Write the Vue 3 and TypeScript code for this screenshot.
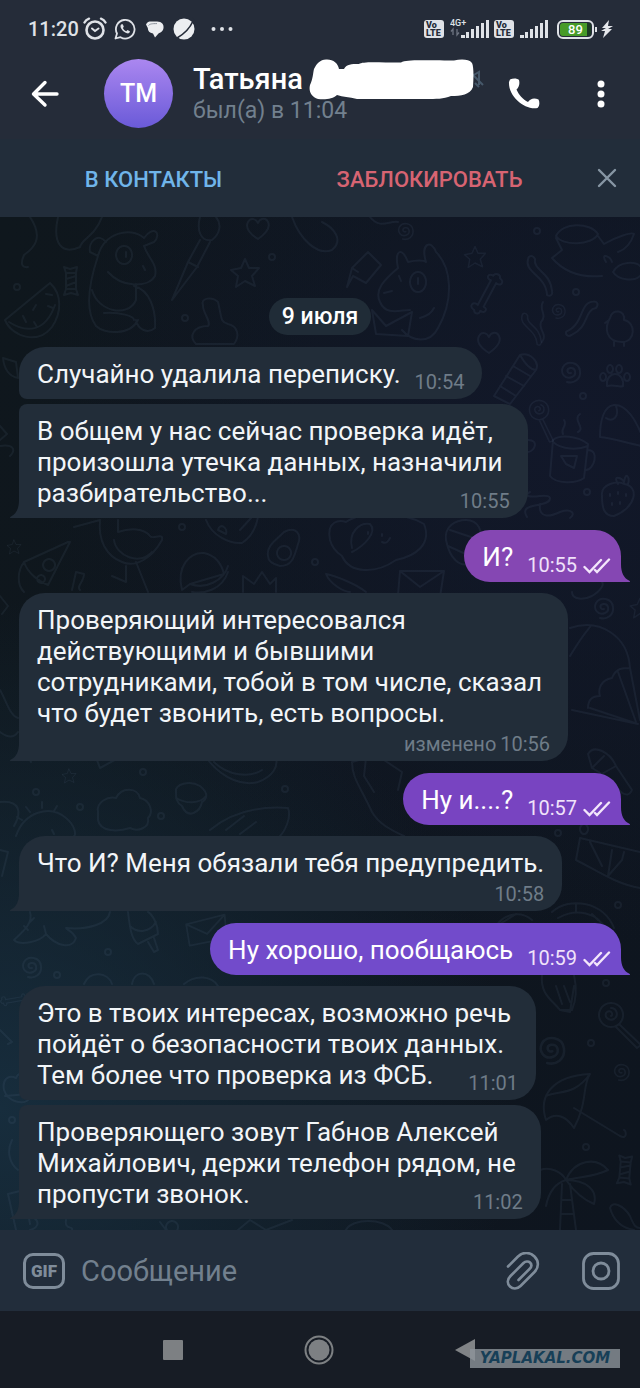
<script setup lang="ts">
import { ref } from 'vue'

type MetaMode = 'inline' | 'overlap' | 'below'

interface Message {
  id: number
  lines: string[]
  time: string
  out?: boolean
  edited?: boolean
  mode: MetaMode
  tail: boolean
  joinTop?: boolean
  joinBottom?: boolean
  tint?: string
}

interface Doodle {
  shape: string
  x: number
  y: number
  scale?: number
  turn?: number
}

const draft = ref('')

const messages: Message[] = [
  { id: 1, lines: ['Случайно удалила переписку.'], time: '10:54', mode: 'inline', tail: false, joinBottom: true },
  {
    id: 2,
    lines: ['В общем у нас сейчас проверка идёт,', 'произошла утечка данных, назначили', 'разбирательство...'],
    time: '10:55', mode: 'overlap', tail: true, joinTop: true,
  },
  { id: 3, lines: ['И?'], time: '10:55', out: true, mode: 'inline', tail: true, tint: 'pink' },
  {
    id: 4,
    lines: ['Проверяющий интересовался', 'действующими и бывшими', 'сотрудниками, тобой в том числе, сказал', 'что будет звонить, есть вопросы.'],
    time: '10:56', edited: true, mode: 'below', tail: true,
  },
  { id: 5, lines: ['Ну и....?'], time: '10:57', out: true, mode: 'inline', tail: true, tint: 'violet' },
  { id: 6, lines: ['Что И? Меня обязали тебя предупредить.'], time: '10:58', mode: 'below', tail: true },
  { id: 7, lines: ['Ну хорошо, пообщаюсь'], time: '10:59', out: true, mode: 'inline', tail: true, tint: 'indigo' },
  {
    id: 8,
    lines: ['Это в твоих интересах, возможно речь', 'пойдёт о безопасности твоих данных.', 'Тем более что проверка из ФСБ.'],
    time: '11:01', mode: 'overlap', tail: false, joinBottom: true,
  },
  {
    id: 9,
    lines: ['Проверяющего зовут Габнов Алексей', 'Михайлович, держи телефон рядом, не', 'пропусти звонок.'],
    time: '11:02', mode: 'overlap', tail: true, joinTop: true,
  },
]

const shapes: Record<string, string> = {
  star: 'M0 -14L4 -5L14 -5L7 3L10 13L0 8L-9 14L-7 3L-14 -3L-4 -5Z',
  heart: 'M0 11C-8 6 -13 0 -10 -6C-7 -11 -2 -9 0 -5C2 -10 8 -11 10 -6C13 0 7 6 0 11Z',
  spiral: 'M1 1C-3 2 -4 -3 0 -4C6 -5 7 3 2 5C-5 8 -10 1 -7 -5C-3 -12 9 -10 10 -1C11 7 4 12 -3 10',
  dot: 'M-3 0A3 3 0 1 0 3 0A3 3 0 1 0 -3 0',
  candy: 'M-5 -8H5V8H-5ZM-5 -8L-7 -14L-1 -12L6 -14L5 -8M-5 8L-7 14L0 12L7 14L5 8M-5 -2L5 -5M-5 5L5 1',
  bone: 'M-3 -14V14C-9 12 -11 20 -4 20C-2 24 3 22 2 18C8 19 8 12 3 13V-14C8 -12 11 -19 4 -20C3 -24 -3 -23 -3 -19C-9 -20 -9 -13 -3 -14Z',
  paw: 'M-8 10C-9 2 -4 -2 0 -2C5 -2 9 3 8 10C4 12 0 8 -8 10ZM-12 -3a3 4 0 1 0 .1 0M-5 -11a3 4 0 1 0 .1 0M4 -11a3 4 0 1 0 .1 0M12 -3a3 4 0 1 0 .1 0',
  lolly: 'M0 -12A12 12 0 1 0 .1 -12M0 -7C6 -7 8 1 3 4C-3 7 -8 0 -4 -3C0 -6 3 0 0 1M8 9L30 30L26 33L5 12',
  letter: 'M-22 -12L22 -12L18 14L-24 12ZM-22 -12L-2 4L22 -12',
  ribbon: 'M-10 -18C-14 -4 8 -2 9 18C12 20 15 18 14 14C12 -6 -5 -6 -3 -18C-5 -22 -9 -22 -10 -18Z',
}

const doodles: Doodle[] = [
  { shape: 'heart', x: 258, y: 228 }, { shape: 'star', x: 245, y: 273 }, { shape: 'dot', x: 272, y: 257 },
  { shape: 'dot', x: 185, y: 318 }, { shape: 'candy', x: 71, y: 281 }, { shape: 'dot', x: 17, y: 287 },
  { shape: 'spiral', x: 405, y: 231, scale: 0.8 }, { shape: 'star', x: 475, y: 257, scale: 0.75 },
  { shape: 'bone', x: 487, y: 294, turn: 28 }, { shape: 'heart', x: 489, y: 342 },
  { shape: 'ribbon', x: 538, y: 277 }, { shape: 'dot', x: 537, y: 231 }, { shape: 'dot', x: 576, y: 292 },
  { shape: 'spiral', x: 558, y: 311, scale: 0.7 }, { shape: 'ribbon', x: 530, y: 330, scale: 0.8 },
  { shape: 'ribbon', x: 580, y: 317, turn: 70 }, { shape: 'spiral', x: 570, y: 372 },
  { shape: 'paw', x: 615, y: 376 }, { shape: 'dot', x: 583, y: 396 }, { shape: 'lolly', x: 539, y: 410, scale: 0.8, turn: 20 },
  { shape: 'dot', x: 587, y: 492 }, { shape: 'star', x: 14, y: 547, scale: 0.5 }, { shape: 'letter', x: 422, y: 583 },
  { shape: 'spiral', x: 603, y: 608 }, { shape: 'star', x: 640, y: 608, scale: 0.7 },
  { shape: 'star', x: 69, y: 776, scale: 0.5 }, { shape: 'dot', x: 36, y: 792 }, { shape: 'dot', x: 80, y: 807 },
  { shape: 'dot', x: 161, y: 816 }, { shape: 'dot', x: 285, y: 789 }, { shape: 'dot', x: 143, y: 772 },
  { shape: 'letter', x: 208, y: 930, scale: 0.9, turn: -14 }, { shape: 'dot', x: 108, y: 952 },
  { shape: 'spiral', x: 31, y: 967 }, { shape: 'dot', x: 57, y: 975 }, { shape: 'dot', x: 618, y: 905 },
  { shape: 'dot', x: 606, y: 983 }, { shape: 'lolly', x: 611, y: 1015 }, { shape: 'spiral', x: 551, y: 1050, scale: 1.3 },
  { shape: 'dot', x: 591, y: 1043 }, { shape: 'spiral', x: 621, y: 1072, scale: 0.8 }, { shape: 'dot', x: 586, y: 1147 },
  { shape: 'candy', x: 625, y: 1170, turn: 5 }, { shape: 'dot', x: 12, y: 1120 }, { shape: 'bone', x: 14, y: 1000, scale: 0.6, turn: 80 },
  { shape: 'dot', x: 315, y: 562 }, { shape: 'dot', x: 182, y: 527 }, { shape: 'dot', x: 558, y: 833 },
]

const sketches: string[] = [
  // squiggle, melon and dog
  'M30 217C44 238 34 248 24 255C20 264 22 268 28 267M58 217C52 244 62 255 80 247C82 238 94 238 102 217',
  'M50 283L5 320C12 337 38 345 52 327C62 312 62 294 50 283ZM9 322C26 333 45 333 55 305M23 316l3 6M36 305l-3 5M48 306l5 2M34 322l3 5M46 294l6 1',
  'M106 242C98 232 88 242 90 252L98 256C104 233 130 226 144 238C154 224 162 234 154 242L144 246C148 258 158 264 155 276C148 288 122 288 108 272M98 256C90 280 84 310 96 326C104 334 130 336 138 320M124 246a8 9 0 1 0 .1 0M126 252v5M143 266l2 4M134 286C150 290 156 310 155 328C148 334 138 330 136 320M92 290C98 312 128 318 136 300V284M104 313C120 312 134 316 134 320',
  // brush and bunny
  'M200 217C196 232 202 242 212 240C220 234 222 224 216 217M200 240L188 262L172 300L197 267L210 242M188 262L198 267',
  'M203 305C200 298 212 296 218 302C222 318 220 322 228 324C238 326 240 336 234 344H196C188 336 194 326 208 326C212 322 202 312 203 305Z',
  // shell, pencil, puppy
  'M292 217C300 240 318 256 332 250C344 240 334 228 322 222M370 217C380 230 390 220 398 222',
  'M347 287L352 268L368 252L381 265L366 283L353 276ZM352 268L358 272',
  'M398 268C394 250 402 246 408 262C416 260 424 260 426 262C420 242 432 240 436 252C452 268 454 300 438 328C430 344 412 342 402 330M398 268C384 280 374 290 380 302C386 316 400 310 410 310M418 272a8 10 0 1 0 .1 0M418 278v6M399 276l2 5M384 293l8 -2M372 310L376 334L408 336L412 312L386 326L372 310M420 318C428 316 432 312 434 308',
  // jar and crab
  'M556 236C562 222 590 222 598 234C592 246 562 246 556 236ZM556 238L562 250L552 258C564 272 580 278 602 276M598 236L604 244C618 236 632 232 634 234C630 246 624 250 618 252M606 262C600 252 610 256 612 262M613 272C620 260 636 262 640 266M613 272C618 280 634 282 640 276',
  'M543 302C538 310 548 314 541 322C538 330 548 334 542 342',
  // firework tube, duck
  'M494 396L520 355C530 352 540 362 536 370L510 404ZM500 386L516 396M506 376L524 386M513 366L530 376M520 355C524 362 530 370 536 370',
  'M610 318C612 308 626 310 624 320C636 322 636 342 622 342C606 342 604 328 610 318ZM614 342v4M624 342v4M609 320l-4 3',
  // cake slice, mug, strawberry
  'M600 437C600 420 604 406 614 405C626 404 636 420 642 436M600 437C612 438 630 444 642 446M606 418C612 422 620 418 616 406',
  'M553 440L550 476C556 484 576 484 584 478L588 444C578 436 560 434 553 440ZM553 442C562 450 578 450 588 446M588 450C600 450 594 470 586 470M561 456L577 456L574 468L566 464ZM563 434C560 428 568 426 564 420M578 432C586 428 572 420 580 414',
  'M602 496C600 484 618 480 624 484C640 486 636 508 614 516C604 516 602 508 602 496ZM618 484C612 474 622 478 624 482C626 470 630 478 628 484M610 494v2M618 492v2M626 494v2M612 503v2M620 502v2',
  'M527 517C520 506 534 506 542 504C552 502 554 494 540 496C524 498 526 494 530 492M540 504C538 520 552 516 560 512C572 508 576 514 570 518M528 440C540 440 534 452 528 452',
  // pizza, stork, burger
  'M68 542L24 562C28 574 40 582 48 585L70 542ZM49 559a6 6 0 1 0 .1 0M41 575a4 4 0 1 0 .1 0M24 562C18 570 16 584 24 592',
  'M74 527L100 520C98 540 106 556 122 562C136 568 152 558 162 540C164 532 152 540 150 536C144 528 130 528 118 532M118 520V532M126 566L126 582L112 576M136 562L148 592M114 540C116 556 140 566 152 552',
  'M182 590C176 566 190 552 204 553C218 556 222 566 224 574L190 584ZM190 584C206 590 224 580 228 566M192 592C204 594 222 590 228 572',
  'M206 520C212 536 230 544 242 543C250 538 256 528 258 517M218 530C220 522 228 528 226 534ZM240 530L252 517',
  'M268 556C266 546 276 540 284 532C296 526 302 534 298 544C294 558 292 566 280 566C272 564 268 560 268 556ZM284 546a7 7 0 1 0 .1 0M243 592V576L254 584L262 572L270 584L276 578V592M72 590L76 572L84 574C84 582 76 586 80 590',
  // bear
  'M330 540C326 520 340 520 346 522C360 512 400 510 424 524C432 544 416 556 396 560C376 574 350 574 342 556C336 552 332 548 330 540ZM352 548C348 532 360 522 370 524C378 532 364 546 352 552M368 532v2M382 534v2M382 542C386 544 388 542 390 538',
  'M446 540C444 526 456 520 466 520C478 520 484 530 480 548M446 540C450 560 460 566 468 564M450 530L480 540M448 546L470 556M326 574C336 576 356 584 366 592M326 574C330 584 344 592 350 592',
  // parachute
  'M570 628C600 618 628 636 630 668C622 668 616 668 612 678C600 680 598 690 600 696C592 696 588 700 588 708M570 656C582 636 586 632 590 627M630 668L640 720M618 672L636 722M572 710L638 724M590 708L638 724M572 592C572 600 584 600 592 596C602 590 604 584 602 582',
  // cactus, bowl, cloud and shuttle
  'M31 762C24 750 26 742 36 742H90L100 768L122 756M352 762C352 778 360 786 372 812C380 826 396 832 404 836M352 762L366 758L364 776L374 792M384 760L402 772L398 790',
  'M208 760C224 780 244 786 258 782C274 776 278 766 276 758M214 762C228 776 250 778 262 770',
  'M98 812C96 802 108 796 116 798C122 786 138 788 140 798C150 800 154 812 148 818C150 828 138 832 130 828C118 832 100 832 98 820ZM176 792C174 784 190 780 200 786C210 794 206 800 202 802C200 812 188 820 182 806C176 802 176 798 176 792ZM176 798C186 804 200 804 206 796',
  'M210 830C232 812 260 806 288 808C292 818 284 832 280 836M226 830L244 816M240 834L256 822',
  'M16 836C24 812 50 804 66 818C76 826 76 836 74 836M22 820l-5 -3M30 812l-4 -5M42 808l0 -6M54 811l3 -5M52 830l2 4M0 802C20 800 22 812 14 826',
  'M588 754C594 744 610 752 616 766L632 790C628 800 618 792 612 780L592 768ZM592 768L604 756M598 776L616 766',
  // picture frame and fruit arc
  'M580 838L640 852M580 838L576 860C596 870 616 884 640 888M612 850L608 876L622 860L624 852M590 842L602 866M584 834a4 5 0 1 1 .1 0',
  'M552 912C570 896 604 902 614 928M558 918C576 908 598 912 606 930M576 904L576 912M592 914l6 6',
  // dinosaur and ice cream
  'M30 912C34 924 20 934 14 940C20 946 40 942 46 934C56 946 72 950 76 938C72 930 66 930 66 928C88 930 108 924 110 912M30 922l4 -4M28 930l-4 -4M46 934L44 926',
  'M128 912C130 930 132 940 138 944L158 934C158 924 152 914 148 912M130 926C138 934 150 932 156 922M148 942L154 952L158 950L154 938',
  'M84 984C90 970 108 972 112 984M132 984C134 970 150 970 154 984M184 984C196 974 212 976 218 986M496 926C504 914 520 910 532 920M500 924l16 -10',
  // light bulb, umbrella
  'M542 975C540 994 552 1000 560 1010L572 1010C578 996 576 984 574 975M560 1010L570 1012L574 986M556 986L562 1004M564 986L570 1002',
  'M546 1120C538 1096 552 1076 590 1074C582 1086 588 1102 574 1128C566 1116 556 1112 546 1120ZM546 1096C560 1090 574 1096 590 1074M574 1108L620 1136C628 1140 626 1130 624 1130',
  // palm
  'M540 1170C550 1166 562 1172 566 1180C574 1160 596 1156 608 1170C592 1178 580 1176 566 1180C586 1180 598 1190 594 1204C584 1200 576 1194 566 1180C552 1184 548 1196 546 1206M560 1230L562 1184M576 1230L570 1184M562 1200h10M561 1214h13',
  'M610 1208C612 1200 624 1206 630 1216C634 1226 636 1228 640 1228M610 1208C614 1222 622 1228 634 1230M8 1194L24 1190L30 1224M8 1194L16 1230M34 1218C40 1222 38 1228 30 1230M66 1220C64 1230 74 1226 72 1230M160 1222L166 1230M172 1221a6 6 0 1 0 .1 0M238 1230L250 1220L266 1230L292 1220M346 1230C352 1218 384 1218 392 1230M12 1140C6 1152 10 1164 18 1170',
  'M4 1090C2 1080 8 1074 16 1078C20 1068 30 1078 24 1084M4 1090C8 1102 24 1106 30 1098M5 1096L28 1094M0 1030L12 1042L8 1044M0 850L8 852L2 876M0 426L7 434L0 440M3 358L16 362L18 378C8 376 4 368 3 358Z',
  'M0 690C6 700 10 716 18 718M0 732C8 738 14 738 18 732M0 596L8 606L2 614M0 446C14 444 16 450 10 456',
]

function place(d: Doodle): string {
  return `translate(${d.x} ${d.y}) rotate(${d.turn ?? 0}) scale(${d.scale ?? 1})`
}
</script>

<template>
  <div class="screen">
    <header class="top">
      <div class="status">
        <span class="clock">11:20</span>
        <svg class="s-alarm" width="24" height="24" viewBox="0 0 24 24" fill="none" stroke="#dfe2e7" stroke-linecap="round">
          <circle cx="12" cy="13" r="8.5" stroke-width="2.6" />
          <path d="M1.5 5.5C2.5 3.5 4 2.3 6 1.7M22.5 5.5C21.5 3.5 20 2.3 18 1.7" stroke-width="2.4" />
          <path d="M9 11.5L12 14L15.5 11.5" stroke-width="2" />
        </svg>
        <svg class="s-wa" width="22" height="22" viewBox="0 0 22 22">
          <path d="M1.5 20.5L3 15.500A9.300 9.300 0 1 1 6.500 19.200Z" fill="none" stroke="#dfe2e7" stroke-width="1.8" stroke-linejoin="round" />
          <path d="M7.500 6.200C6.200 7 6.200 8.800 7.200 10.500C8.600 13 10.500 14.600 13 15.300C14.800 15.700 16 14.500 15.900 13.200L13.500 12L12.300 13.200C10.800 12.600 9.500 11.400 8.900 9.900L9.800 8.800L8.800 6.300Z" fill="#dfe2e7" />
        </svg>
        <svg class="s-msg" width="20" height="20" viewBox="0 0 20 20">
          <path d="M1 5.500C2 3 4 2.500 6 2.500H12C17 2.500 19 5.500 18.500 9C18 12.500 15.500 13.500 13.500 14.500L10 18.500L8 14.500C4.500 14 2.800 12 2.800 9Z" fill="#eceef1" />
          <path d="M3.500 6.500C5 4.800 7 4.600 12 4.600" fill="none" stroke="#8b919b" stroke-width="1" />
        </svg>
        <svg class="s-globe" width="24" height="24" viewBox="0 0 24 24">
          <circle cx="12" cy="12" r="10.500" fill="#eceef1" />
          <path d="M5 21C12 17 18 11 21 4" fill="none" stroke="#252c39" stroke-width="1.600" />
          <path d="M0 18L5 24H0ZM20 0L24 5V0Z" fill="#252c39" />
        </svg>
        <svg class="s-dots" width="22" height="6" viewBox="0 0 22 6" fill="#dfe2e7">
          <circle cx="2.500" cy="3" r="2" /><circle cx="11" cy="3" r="2" /><circle cx="19.500" cy="3" r="2" />
        </svg>
        <span class="spacer"></span>
        <span class="volte">Vo<br>LTE</span>
        <svg class="s-sig4" width="40" height="22" viewBox="0 0 40 22" fill="#dfe2e7">
          <text x="0" y="8" class="tiny">4G+</text>
          <path d="M3 11V17M1 13.500L3 11L3 17M7 11V17L9 14.500" fill="none" stroke="#6d7481" stroke-width="1.300" />
          <path d="M11 17h4v3h-4zM16 14h3v6h-3zM21 11h3v9h-3zM26 8h3v12h-3zM31 5h3v15h-3zM36 2h3v18h-3z" />
        </svg>
        <span class="volte">Vo<br>LTE</span>
        <svg class="s-sig" width="29" height="22" viewBox="11 0 29 22" fill="#dfe2e7">
          <path d="M11 17h4v3h-4zM16 14h3v6h-3zM21 11h3v9h-3zM26 8h3v12h-3zM31 5h3v15h-3zM36 2h3v18h-3z" />
        </svg>
        <span class="battery"><span class="charge">89</span></span>
        <svg class="s-bolt" width="12" height="18" viewBox="0 0 12 18">
          <path d="M8 0L1 8H5L0 11H4L2 18L11 9H7L12 6H7Z" fill="#e6e8ec" />
        </svg>
      </div>

      <div class="bar">
        <button class="icon-btn back" aria-label="Назад">
          <svg width="28" height="28" viewBox="0 0 28 28" fill="none" stroke="#fff" stroke-width="3.400" stroke-linecap="round" stroke-linejoin="round">
            <path d="M26 14H3M14 2.500L2.500 14L14 25" />
          </svg>
        </button>
        <div class="avatar">ТМ</div>
        <div class="who">
          <h1 class="name">Татьяна
            <svg class="scribble" width="176" height="42" viewBox="0 0 176 42">
              <path d="M163 17L170 13V26M166 24L170 28M162 14L174 26" stroke="#46586a" stroke-width="2" fill="none" />
              <path d="M17 0.500C24 0 29 4 30 10H35C38 5 42 5 50 5C54 2 70 3.500 92 3.500C98 0.500 110 1.500 145 1.500C152 0 160 0 163 4C165 8 164.500 20 164 28C161 36 152 37 142 37C134 40 128 40 116 40H48C40 38 34 38 28 36C24 40 16 41 9 40C2 38 -0.500 32 1 26C4 20 4 14 5 10C8 4 11 1 17 0.500Z" fill="#fff" />
            </svg>
          </h1>
          <p class="seen">был(а) в 11:04</p>
        </div>
        <button class="icon-btn call" aria-label="Позвонить">
          <svg width="32" height="32" viewBox="0 0 32 32">
            <path d="M2 1.500C5 0 9 0 11 2C12 6 11 9 8.500 11.500C10.500 16.500 15 21.500 20 24C22.500 20.500 26 19.500 30.500 21.500C32 24.500 31.500 28 29.500 30C17 32.500 0 18 1 4Z" fill="#fff" />
          </svg>
        </button>
        <button class="icon-btn more" aria-label="Ещё">
          <svg width="8" height="28" viewBox="0 0 8 28" fill="#fff">
            <circle cx="4" cy="4" r="3.500" /><circle cx="4" cy="14" r="3.500" /><circle cx="4" cy="24" r="3.500" />
          </svg>
        </button>
      </div>
    </header>

    <div class="actions">
      <button class="act add">В КОНТАКТЫ</button>
      <button class="act block">ЗАБЛОКИРОВАТЬ</button>
      <button class="icon-btn close" aria-label="Закрыть">
        <svg width="20" height="20" viewBox="0 0 20 20" stroke="#8796a4" stroke-width="2.400" stroke-linecap="round">
          <path d="M2 2L18 18M18 2L2 18" />
        </svg>
      </button>
    </div>

    <main class="chat">
      <svg class="wallpaper" viewBox="0 217 640 1013" preserveAspectRatio="xMidYMin slice" aria-hidden="true">
        <path v-for="(d, i) in sketches" :key="'s' + i" :d="d" />
        <path v-for="(d, i) in doodles" :key="'d' + i" :d="shapes[d.shape]" :transform="place(d)" />
      </svg>
      <div class="date">9 июля</div>
      <article
        v-for="m in messages"
        :key="m.id"
        class="bubble"
        :class="[m.mode, m.out ? 'out' : 'in', m.tint, { tailed: m.tail, edited: m.edited, 'join-top': m.joinTop, 'join-bottom': m.joinBottom }]"
      >
        <p class="text"><template v-for="(line, i) in m.lines" :key="i"><br v-if="i > 0">{{ line }}</template></p>
        <div class="meta">
          <span v-if="m.edited">изменено</span>
          <time>{{ m.time }}</time>
          <svg v-if="m.out" class="ticks" width="28" height="16" viewBox="0 0 28 16" fill="none" stroke="#f3e6fb" stroke-width="2.400" stroke-linecap="round">
            <path d="M1.500 9L6.500 14L18 2M12 12L14 14L26 1.500" />
          </svg>
        </div>
        <svg v-if="m.tail" class="tail" width="10" height="18" viewBox="0 0 10 18">
          <path d="M10 0V18H0.500C-0.500 18 0 17 1 16.500C6 14 9 9 9 0Z" />
        </svg>
      </article>
    </main>

    <form class="composer" @submit.prevent>
      <button type="button" class="gif" aria-label="GIF">GIF</button>
      <input v-model="draft" class="field" type="text" placeholder="Сообщение" aria-label="Сообщение">
      <button type="button" class="icon-btn clip" aria-label="Прикрепить">
        <svg width="34" height="38" viewBox="0 0 34 38" fill="none" stroke="#7f8c9a" stroke-width="2.600" stroke-linecap="round" stroke-linejoin="round">
          <path d="M2 14.500L12 4.500C17 -0.500 24 0 28.500 4.500C33 9 33 15.500 28.500 20L14.500 34C11 37.500 6.500 37 4 34.500C1 31.500 1 27.500 4.500 24L17.500 11C19.500 9 22.500 9 24 10.500C26 12.500 25.500 15 23.500 17L12.500 28" />
        </svg>
      </button>
      <button type="button" class="icon-btn cam" aria-label="Камера">
        <svg width="38" height="38" viewBox="0 0 38 38" fill="none" stroke="#7f8c9a" stroke-width="2.800">
          <rect x="1.500" y="1.500" width="35" height="35" rx="10" />
          <circle cx="19" cy="19" r="8" />
        </svg>
      </button>
    </form>

    <nav class="nav">
      <button class="icon-btn" aria-label="Недавние">
        <svg width="20" height="20" viewBox="0 0 20 20"><rect width="20" height="20" rx="1" fill="#7d8083" /></svg>
      </button>
      <button class="icon-btn" aria-label="Домой">
        <svg width="30" height="30" viewBox="0 0 30 30">
          <circle cx="15" cy="15" r="13.500" fill="none" stroke="#7d8083" stroke-width="2" />
          <circle cx="15" cy="15" r="10.500" fill="#7d8083" />
        </svg>
      </button>
      <button class="icon-btn" aria-label="Назад">
        <svg width="20" height="22" viewBox="0 0 20 22"><path d="M0 11L20 0V22Z" fill="#808386" /></svg>
      </button>
      <span class="mark">YAPLAKAL.COM</span>
    </nav>
  </div>
</template>

<style>
body {
  background: #171c25;
}
</style>

<style scoped>
.screen {
  display: flex;
  flex-direction: column;
  min-height: 100vh;
  font-family: Roboto, "Noto Sans", sans-serif;
  color: #f2f5f8;
}

.icon-btn {
  display: flex;
  padding: 0;
  border: 0;
  background: none;
}

.top {
  background: #252c39;
}

.status {
  display: flex;
  align-items: center;
  height: 58px;
  padding: 0 27px 0 28px;
}

.clock {
  font-size: 20px;
  font-weight: 500;
  color: #dfe2e7;
}

.s-alarm { margin-left: 4px; }
.s-wa { margin-left: 7px; }
.s-msg { margin-left: 9px; }
.s-globe { margin-left: 7px; }
.s-dots { margin-left: 15px; }
.s-sig4 { margin: 0 4px 0 6px; }
.s-sig { margin: 0 8px 0 6px; }
.s-bolt { margin-left: 7px; }

.spacer {
  flex: 1;
}

.tiny {
  font-size: 9px;
  font-weight: 500;
}

.volte {
  width: 20px;
  height: 18px;
  border-radius: 3px;
  background: #dfe2e7;
  color: #252c39;
  font-size: 9px;
  font-weight: 900;
  line-height: 8px;
  padding: 1px 2px;
  box-sizing: border-box;
}

.battery {
  position: relative;
  display: flex;
  width: 37px;
  height: 19px;
  box-sizing: border-box;
  padding: 1px;
  border: 2px solid #dfe2e7;
  border-radius: 6px;
}

.battery::after {
  content: "";
  position: absolute;
  right: -5px;
  top: 5px;
  width: 2px;
  height: 5px;
  background: #dfe2e7;
}

.charge {
  flex: 1;
  border-radius: 3px;
  background: linear-gradient(90deg, #479b28 88%, #1c3a24 88%);
  color: #fff;
  font-size: 13px;
  font-weight: 500;
  line-height: 13px;
  text-align: center;
}

.bar {
  display: flex;
  align-items: center;
  height: 71px;
  padding: 0 35px 10px 31px;
}

.avatar {
  display: flex;
  align-items: center;
  justify-content: center;
  width: 69px;
  height: 69px;
  margin: 0 20px 0 45px;
  border-radius: 50%;
  background: linear-gradient(#ab87f0, #6a5ad8);
  color: #fff;
  font-size: 25px;
  font-weight: 500;
}

.who {
  flex: 1;
  min-width: 0;
}

.name {
  position: relative;
  margin: 0;
  width: max-content;
  font-size: 29px;
  font-weight: 500;
  line-height: 34px;
  color: #fff;
}

.scribble {
  position: absolute;
  left: 100%;
  top: -3px;
  margin-left: 6px;
}

.seen {
  margin: 0;
  font-size: 23px;
  line-height: 30px;
  color: #72808e;
}

.more {
  margin-left: 57px;
}

.actions {
  display: flex;
  align-items: center;
  height: 78px;
  padding-right: 23px;
  background: #222d3a;
}

.act {
  padding: 3px 0 0;
  border: 0;
  background: none;
  font-family: inherit;
  font-size: 22px;
  font-weight: 500;
  line-height: 30px;
}

.add {
  flex: 307;
  color: #70b5ea;
}

.block {
  flex: 245;
  color: #d76472;
}

.close {
  margin-left: 45px;
}

.chat {
  position: relative;
  isolation: isolate;
  flex: 1;
  display: flex;
  flex-direction: column;
  align-items: flex-start;
  padding: 81px 19px 11px;
  overflow: hidden;
  background:
    radial-gradient(ellipse 85% 50% at 90% 22%, #12182a, transparent),
    radial-gradient(ellipse 80% 50% at 0% 88%, #172d3d, transparent),
    linear-gradient(100deg, #0f171d, #0e151f);
}

.wallpaper {
  position: absolute;
  inset: 0;
  z-index: -1;
  width: 100%;
  height: 100%;
  fill: none;
  stroke: rgba(140, 165, 205, 0.08);
  stroke-width: 2;
  stroke-linecap: round;
  stroke-linejoin: round;
}

.date {
  align-self: center;
  margin-bottom: 12px;
  padding: 0 13px;
  border-radius: 19px;
  background: #202c37;
  color: #fff;
  font-size: 23px;
  font-weight: 500;
  line-height: 37px;
}

.bubble {
  position: relative;
  display: flex;
  flex-direction: column;
  padding: 12px 18px 5px;
  border-radius: 26px;
  background: #222d39;
  margin-bottom: 12px;
  --tail: #222d39;
}

.bubble:last-child { margin-bottom: 0; }

.text {
  margin: 0 0 4px;
  font-size: 26px;
  line-height: 31px;
  white-space: nowrap;
}

.meta {
  display: flex;
  gap: 6px;
  align-self: flex-end;
  font-size: 20px;
  line-height: 23px;
  color: #6f7c88;
}

.inline {
  flex-direction: row;
  column-gap: 14px;
}

.overlap .text { padding-right: 7px; }
.overlap .meta { margin-top: -23px; }

.edited .text { padding-right: 8px; }
.edited .meta { gap: 4px; }

.join-bottom {
  margin-bottom: 5px;
  border-bottom-left-radius: 8px;
}

.join-top { border-top-left-radius: 8px; }
.in.tailed { border-bottom-left-radius: 0; }

.out {
  align-self: flex-end;
  margin-bottom: 11px;
  padding-right: 10px;
  color: #fff;
}

.out.tailed { border-bottom-right-radius: 0; }
.out .meta { color: #f0e2fa; }

.ticks {
  margin-top: 4px;
}

.pink { background: #8547b3; --tail: #8547b3; }
.violet { background: #7844c1; --tail: #7844c1; }
.indigo { background: #724bcb; --tail: #724bcb; }

.tail {
  position: absolute;
  left: -9px;
  bottom: 0;
  fill: var(--tail);
}

.out .tail {
  left: auto;
  right: -9px;
  transform: scaleX(-1);
}

.composer {
  display: flex;
  align-items: center;
  height: 81px;
  padding: 0 20px 0 23px;
  background: #222d3b;
}

.gif {
  width: 42px;
  height: 36px;
  padding: 0;
  border: 3px solid #7f8c9a;
  border-radius: 10px;
  background: none;
  color: #7f8c9a;
  font-family: inherit;
  font-size: 17px;
  font-weight: 900;
  line-height: 30px;
}

.field {
  flex: 1;
  min-width: 0;
  height: 40px;
  margin: 0 16px;
  padding: 0;
  border: 0;
  outline: 0;
  background: none;
  color: #f2f5f8;
  font-family: inherit;
  font-size: 29px;
}

.field::placeholder {
  color: #72808e;
  opacity: 1;
}

.cam {
  margin-left: 42px;
}

.nav {
  position: relative;
  display: flex;
  align-items: center;
  justify-content: space-between;
  height: 77px;
  padding: 0 165px 0 163px;
  background: #171c25;
}

.mark {
  position: absolute;
  right: 20px;
  bottom: 20px;
  width: 150px;
  height: 19px;
  background: rgba(140, 148, 154, 0.8);
  color: #173f57;
  font-family: "DejaVu Sans", sans-serif;
  font-size: 15px;
  font-style: italic;
  font-weight: 700;
  line-height: 19px;
  text-align: center;
}
</style>
